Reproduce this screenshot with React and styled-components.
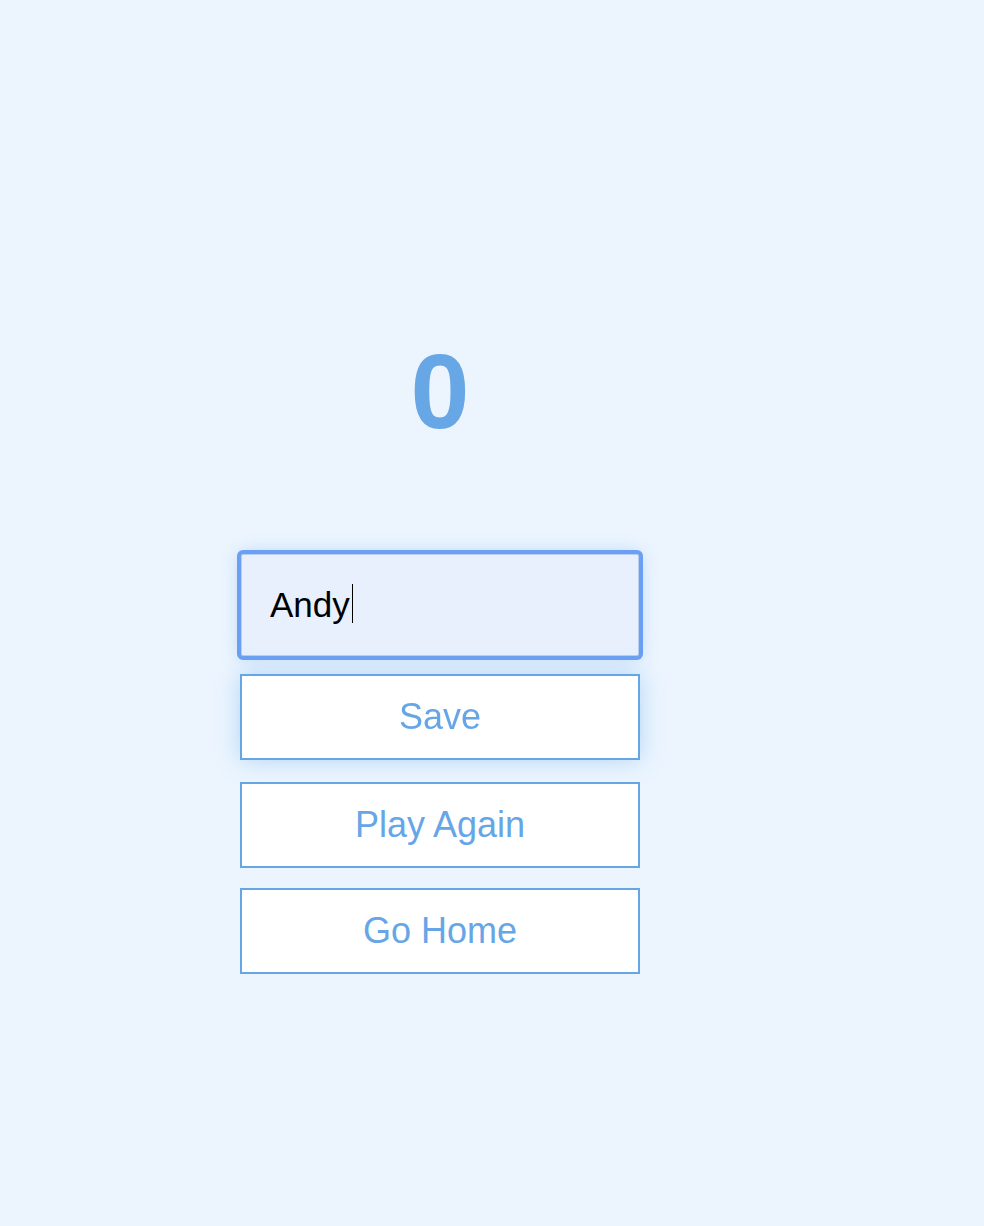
import React, { useState } from 'react';
import styled, { createGlobalStyle } from 'styled-components';

const GlobalStyle = createGlobalStyle`
  html, body {
    margin: 0;
    padding: 0;
    background: #ecf5fe;
    font-family: "Liberation Sans", Arial, Helvetica, sans-serif;
  }
`;

const Page = styled.main`
  min-height: 100vh;
  box-sizing: border-box;
  padding: 338px 0 0 240px;
`;

const Column = styled.div`
  width: 400px;
  display: flex;
  flex-direction: column;
  gap: 20px;
`;

const Score = styled.h1`
  margin: 0 0 89px;
  font-size: 106px;
  line-height: 1;
  font-weight: 700;
  text-align: center;
  color: #68a7e6;
`;

const Field = styled.div`
  position: relative;
  width: 400px;
  height: 104px;
`;

const NameInput = styled.input`
  box-sizing: border-box;
  width: 100%;
  height: 100%;
  padding: 0 28px;
  font-family: inherit;
  font-size: 35px;
  color: #000;
  caret-color: #000;
  background: #e8f0fd;
  border: 2px solid #b7cdf4;
  border-radius: 3px;
  outline: 4px solid #6b9ff1;
  outline-offset: -1px;
  box-shadow: 0 0 18px rgba(110, 170, 235, 0.45);
`;

/* text cursor after the typed name */
const Caret = styled.span`
  position: absolute;
  left: 112px;
  top: 31px;
  width: 1px;
  height: 39px;
  background: #000;
  pointer-events: none;
`;

const Button = styled.button`
  box-sizing: border-box;
  width: 400px;
  height: 86px;
  background: #fff;
  border: 2px solid #66a6e6;
  color: #66a6e6;
  font-family: inherit;
  font-size: 36px;
  cursor: pointer;
  margin-top: ${(p) => (p.$tight ? '-1px' : '0')};
  transform: ${(p) => (p.$hover ? 'translateY(-3px)' : 'none')};
  box-shadow: ${(p) => (p.$hover ? '0 0 22px rgba(110, 175, 240, 0.45)' : 'none')};
`;

export default function App() {
  const [name, setName] = useState('Andy');

  return (
    <>
      <GlobalStyle />
      <Page>
        <Column>
          <Score>0</Score>
          <Field>
            <NameInput
              autoFocus
              value={name}
              onChange={(e) => setName(e.target.value)}
              placeholder="username"
            />
            <Caret />
          </Field>
          <Button $hover>Save</Button>
          <Button $tight>Play Again</Button>
          <Button>Go Home</Button>
        </Column>
      </Page>
    </>
  );
}
